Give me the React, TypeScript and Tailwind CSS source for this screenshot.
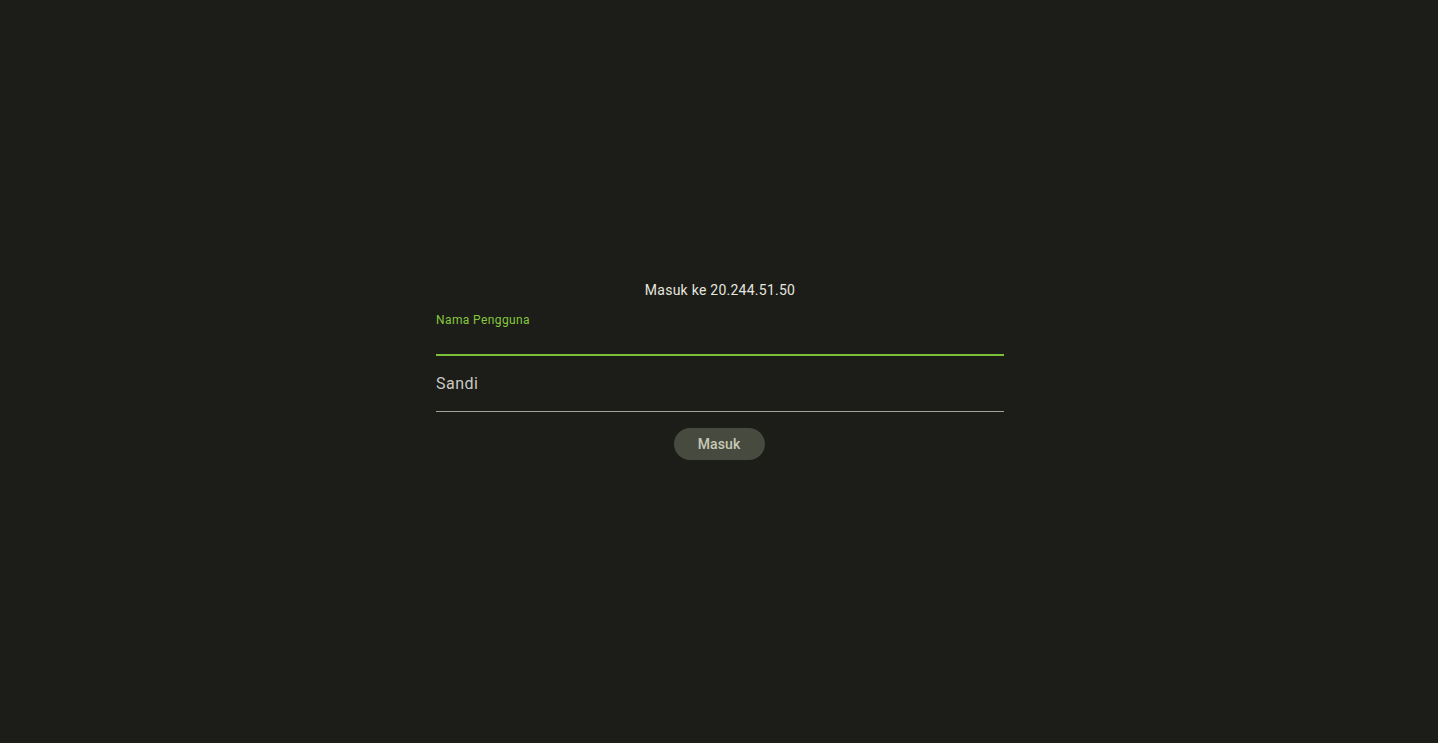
export default function App() {
  return (
    <div className="min-h-screen w-full bg-[#1c1c18] flex items-center justify-center pl-[2px] pb-[3px] font-['Roboto',sans-serif]">
      <form
        className="w-[568px] flex flex-col"
        onSubmit={(e) => e.preventDefault()}
      >
        <div className="h-5 text-center text-sm leading-5 tracking-[0.25px] text-[#e6e6df]">
          Masuk ke 20.244.51.50
        </div>

        {/* Username - focused */}
        <label className="h-14 flex flex-col border-b-2 border-[#7cc03a]">
          <span className="pt-[13px] text-xs leading-[14px] tracking-[0.4px] text-[#86c83e]">Nama Pengguna</span>
          <input
            type="text"
            className="mt-auto mb-2 bg-transparent text-base text-[#e3e3dc] outline-none"
          />
        </label>

        {/* Password */}
        <label className="h-14 flex items-center border-b border-[#a3a39b]">
          <span className="text-base leading-5 tracking-[0.5px] text-[#c9c9c0]">Sandi</span>
        </label>

        <div className="flex justify-center mt-4 pr-[2px]">
          <button
            type="submit"
            className="h-8 w-[91px] rounded-full bg-[#474a3f] text-sm font-medium tracking-[0.1px] text-[#c6c9b6]"
          >
            Masuk
          </button>
        </div>
      </form>
    </div>
  );
}
